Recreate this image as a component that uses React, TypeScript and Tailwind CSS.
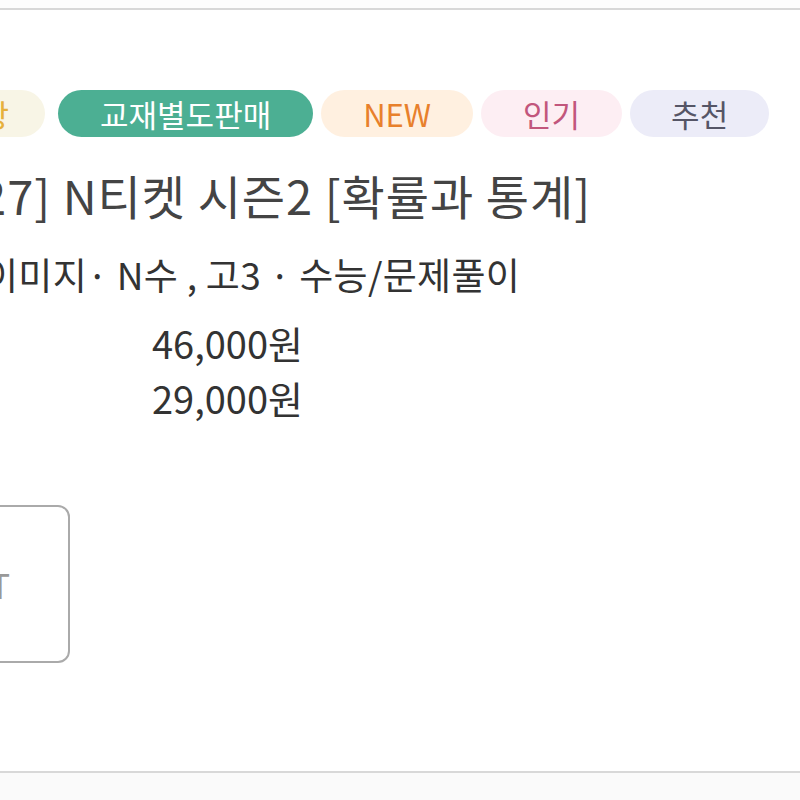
import React from "react";

const KR = { fontFamily: '"Noto Sans CJK KR", "Noto Sans", sans-serif' };

function Badge({ text, cls }: { text: string; cls: string }) {
  return (
    <div
      className={`h-[47px] shrink-0 rounded-full flex items-center text-[31px] leading-none ${cls}`}
    >
      {text}
    </div>
  );
}

export default function App() {
  return (
    <div className="w-[800px] h-[800px] overflow-hidden bg-white flex flex-col" style={KR}>
      <div className="h-[8px] bg-[#fdfdfd]" />
      <div className="h-[2px] bg-[#d8d8d8]" />
      <div className="flex-1 flex flex-col overflow-hidden">
        <div className="mt-[80px] flex gap-[8px] -ml-[90px]">
          <Badge text="최상" cls="pl-[42px] pr-[36px] bg-[#f8f5e6] text-[#e6b03c] mr-[5px]" />
          <Badge text="교재별도판매" cls="px-[42px] bg-[#4caf93] text-white" />
          <Badge text="NEW" cls="px-[42px] bg-[#fff0e0] text-[#e8802c]" />
          <Badge text="인기" cls="px-[42px] bg-[#fdeef3] text-[#c2567c]" />
          <Badge text="추천" cls="px-[41px] bg-[#ececf8] text-[#555566]" />
        </div>
        <div className="mt-[34px] -ml-[91px] whitespace-nowrap text-[47px] leading-[47px] tracking-[1px] text-[#444444]">
          [2027] N티켓 시즌2 [확률과 통계]
        </div>
        <div className="mt-[38px] -ml-[16px] whitespace-nowrap text-[37px] leading-[37px] tracking-[0.3px] text-[#333333]">
          이미지· N수 , 고3 · 수능/문제풀이
        </div>
        <div className="mt-[22px] pl-[152px] text-[38px] leading-[55px] text-[#333333]">
          <div>46,000원</div>
          <div>29,000원</div>
        </div>
        <div className="mt-[80px] -ml-[70px] w-[140px] h-[158px] shrink-0 rounded-[12px] border-2 border-[#aaaaaa] flex items-center justify-end pr-[58px] text-[34px] text-[#999999]">
          <span>T</span>
        </div>
      </div>
      <div className="h-[2px] bg-[#d8d8d8]" />
      <div className="h-[27px] bg-[#fafafa]" />
    </div>
  );
}
